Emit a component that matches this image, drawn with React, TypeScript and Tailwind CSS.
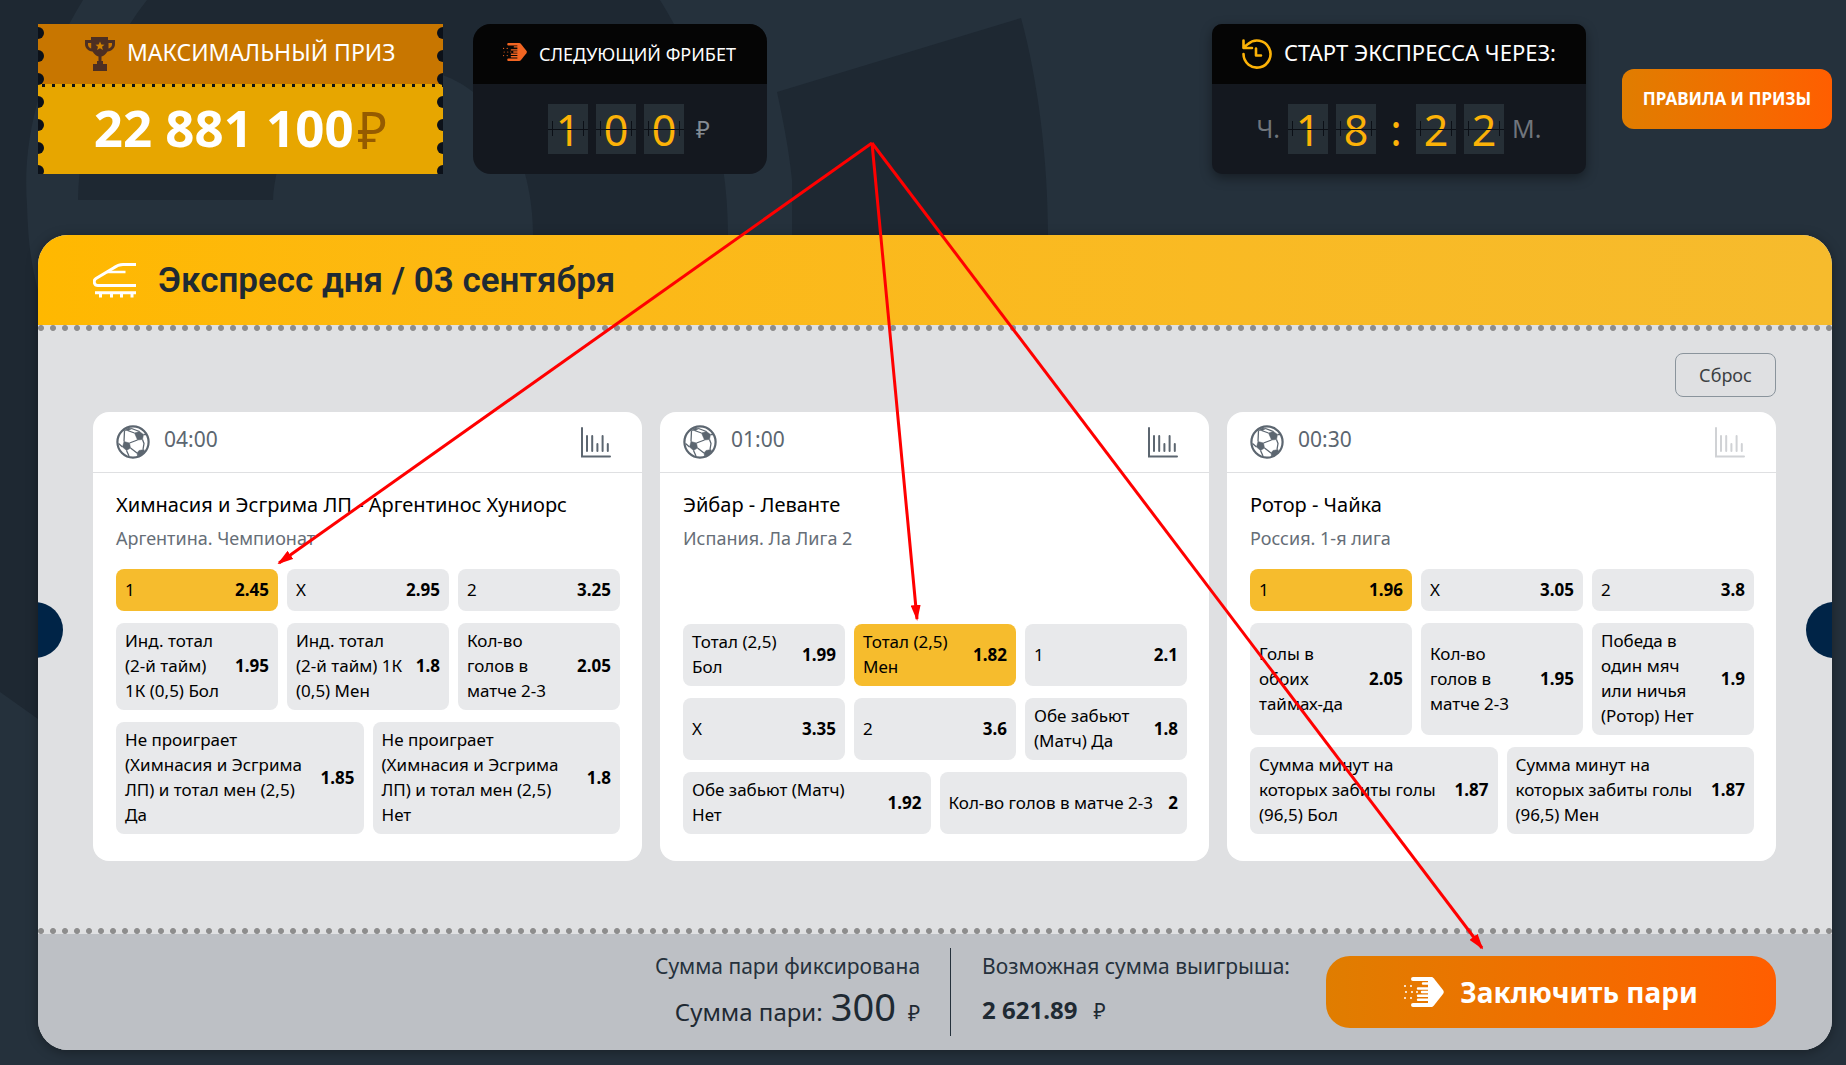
import { Fragment } from 'react'
import clsx from 'clsx'

type Odd = { label: string; value: string; active?: boolean }
type Match = {
  time: string
  teams: string
  league: string
  stats: boolean
  odds: Odd[]
}

const MATCHES: Match[] = [
  {
    time: '04:00',
    teams: 'Химнасия и Эсгрима ЛП - Аргентинос Хуниорс',
    league: 'Аргентина. Чемпионат',
    stats: true,
    odds: [
      { label: '1', value: '2.45', active: true },
      { label: 'X', value: '2.95' },
      { label: '2', value: '3.25' },
      { label: 'Инд. тотал\n(2-й тайм)\n1К (0,5) Бол', value: '1.95' },
      { label: 'Инд. тотал\n(2-й тайм) 1К\n(0,5) Мен', value: '1.8' },
      { label: 'Кол-во\nголов в\nматче 2-3', value: '2.05' },
      { label: 'Не проиграет\n(Химнасия и Эсгрима\nЛП) и тотал мен (2,5)\nДа', value: '1.85' },
      { label: 'Не проиграет\n(Химнасия и Эсгрима\nЛП) и тотал мен (2,5)\nНет', value: '1.8' },
    ],
  },
  {
    time: '01:00',
    teams: 'Эйбар - Леванте',
    league: 'Испания. Ла Лига 2',
    stats: true,
    odds: [
      { label: 'Тотал (2,5)\nБол', value: '1.99' },
      { label: 'Тотал (2,5)\nМен', value: '1.82', active: true },
      { label: '1', value: '2.1' },
      { label: 'X', value: '3.35' },
      { label: '2', value: '3.6' },
      { label: 'Обе забьют\n(Матч) Да', value: '1.8' },
      { label: 'Обе забьют (Матч)\nНет', value: '1.92' },
      { label: 'Кол-во голов в матче 2-3', value: '2' },
    ],
  },
  {
    time: '00:30',
    teams: 'Ротор - Чайка',
    league: 'Россия. 1-я лига',
    stats: false,
    odds: [
      { label: '1', value: '1.96', active: true },
      { label: 'X', value: '3.05' },
      { label: '2', value: '3.8' },
      { label: 'Голы в\nобоих\nтаймах-да', value: '2.05' },
      { label: 'Кол-во\nголов в\nматче 2-3', value: '1.95' },
      { label: 'Победа в\nодин мяч\nили ничья\n(Ротор) Нет', value: '1.9' },
      { label: 'Сумма минут на\nкоторых забиты голы\n(96,5) Бол', value: '1.87' },
      { label: 'Сумма минут на\nкоторых забиты голы\n(96,5) Мен', value: '1.87' },
    ],
  },
]

function TrophyIcon() {
  return (
    <svg viewBox="0 0 30 34" className="h-[34px] w-[30px] shrink-0" fill="#4d2f22">
      <path d="M6 0h17v3h7v4c0 4-3 7-7.500 7.500C20.500 17.500 18.500 19 16.500 19.500V24h1.500v3h4v7H8v-7h4v-3h1.500v-4.500C11.500 19 9.500 17.500 7.500 14.500 3 14 0 11 0 7V3h6V0zM3 6v1.500c0 2 1.500 3.500 3.200 4V6H3zm20.500 0v5.500c2-.5 3.500-2 3.500-4V6h-3.500z" />
      <path d="M15 4.500l1.300 3 3.200.2-2.500 2.100.9 3.200-2.900-1.800-2.900 1.800.9-3.200-2.500-2.100 3.200-.2z" fill="#d08200" />
    </svg>
  )
}

function FastBetIcon({ className }: { className?: string }) {
  return (
    <svg viewBox="0 0 40 30" className={clsx('shrink-0', className)} fill="currentColor">
      <path d="M24 0h3c1.200 0 2 .5 2.700 1.300l9.300 11.700c1 1.300 1 2.700 0 4l-9.300 11.700c-.7.8-1.500 1.300-2.700 1.300h-3z" />
      <path d="M9 2h16M9 28h16" stroke="currentColor" strokeWidth="4" strokeLinecap="round" />
      <path d="M19 6.500h6M14 11.500h11M18 15h7M14 18.800h11M14 22.800h11" stroke="currentColor" strokeWidth="2.400" strokeLinecap="round" />
      {[1, 7].map((x) => (
        <Fragment key={x}>
          <circle cx={x} cy="9" r="1" />
          <circle cx={x + 1} cy="15" r="1" />
          <circle cx={x} cy="21" r="1" />
        </Fragment>
      ))}
      <circle cx="13" cy="15" r="1" />
    </svg>
  )
}

function HistoryIcon() {
  return (
    <svg viewBox="0 0 30 30" className="size-[30px] shrink-0" fill="none" stroke="#fcb207" strokeWidth="2.600" strokeLinecap="round" strokeLinejoin="round">
      <path d="M1.500 15A13.500 13.500 0 1 0 6 5L1.500 8.500M1.500 1.500v7.500h8.500" />
      <path d="M14 9.500v7h5" />
    </svg>
  )
}

function TrainIcon() {
  return (
    <svg viewBox="0 0 44 35" className="h-[35px] w-11 shrink-0" fill="none" stroke="#fff" strokeWidth="3">
      <path d="M43 1.500H30c-4 0-6.500 1.200-9.500 3.500L3 15.500c-3 2-2 7 2 7h38" />
      <path d="M14 9h18.500" strokeWidth="2.500" />
      <path d="M2 29.700h41M7.500 30v4.500M18.500 30v4.500M28.500 30v4.500M39 30v4.500" />
    </svg>
  )
}

function BallIcon() {
  return (
    <svg viewBox="0 0 34 34" className="size-[34px] shrink-0" fill="#5c6670" stroke="#5c6670" strokeLinejoin="round">
      <circle cx="17" cy="17" r="15.600" fill="none" strokeWidth="2.200" />
      <path d="M18.500 8l5-1.500 4 3-1 5-5 .5zM8 16.500l5.500 1.500 1 5-4 2.500L6.500 22zM21 28l2-2.500 5-1 .5 2-4 4-3 .5zM8.500 5.500L12 3l4 .5-3.500 2z" strokeWidth=".5" />
      <path d="M15.500 3.500l8 3M8.500 5.500L8 16.500M11.500 5.500l7 2.500M21.500 15l-8 3M14.500 23l6.500 5M26.500 14.500l1.500 4-1 6M27.500 9.500l2.500 0M2.500 18.500l4 3.500M10.500 25.500l2.500 5.500" fill="none" strokeWidth="1.300" />
    </svg>
  )
}

function StatsIcon() {
  return (
    <svg viewBox="0 0 30 31" className="h-[31px] w-[30px]" fill="none" stroke="currentColor" strokeWidth="2" strokeLinecap="round">
      <path d="M1 1v28.500h28" />
      <path d="M6 9v15M11.200 9v15M16.400 17v7M21.600 9v15M26.800 17v7" />
    </svg>
  )
}

function FlipDigit({ children }: { children: string }) {
  return (
    <span className="relative flex h-[50px] w-10 items-center justify-center bg-[#262f36] text-[43px] leading-none text-[#fcb207]">
      {children}
      <span className="absolute inset-x-0 top-1/2 h-px bg-[#0b0f16]" />
      <span className="absolute inset-x-1 top-[17px] h-[15px] border-x border-[#0b0f16]" />
    </span>
  )
}

function OddButton({ odd, wide }: { odd: Odd; wide: boolean }) {
  return (
    <button
      className={clsx(
        'flex min-h-[42px] items-center justify-between gap-1 rounded-lg px-[9px] pt-[5px] pb-[7px] text-left text-[17px] leading-[25px] text-black',
        wide ? 'col-span-3' : 'col-span-2',
        odd.active ? 'bg-[#f6bc2d]' : 'bg-[#e8e9eb]',
      )}
    >
      <span className="whitespace-pre-line">{odd.label}</span>
      <b className="font-bold">{odd.value}</b>
    </button>
  )
}

function MatchCard({ match }: { match: Match }) {
  return (
    <article className="flex flex-col rounded-2xl bg-white">
      <header className="flex h-[61px] items-center border-b border-[#dfe0e2] px-[23px]">
        <BallIcon />
        <time className="ml-3.5 pb-1.5 text-[21px] leading-7 text-[#5c6670]">{match.time}</time>
        <button
          aria-label="Статистика"
          className={clsx('mr-2 ml-auto', match.stats ? 'text-[#5c6670]' : 'text-[#d0d2d5]')}
        >
          <StatsIcon />
        </button>
      </header>
      <div className="flex grow flex-col px-[22px] pt-[18px] pb-[27px] pl-[23px]">
        <h2 className="text-[20px] leading-[27px] text-black">{match.teams}</h2>
        <p className="mt-2 text-[18px] leading-6 text-[#666e77]">{match.league}</p>
        <div className="mt-auto grid grid-cols-6 gap-x-[9px] gap-y-3 pt-[19px]">
          {match.odds.map((odd, i) => (
            <OddButton key={i} odd={odd} wide={i > 5} />
          ))}
        </div>
      </div>
    </article>
  )
}

function Perforation() {
  return <div className="h-1.5 bg-[radial-gradient(circle,#8d8d8d_2.5px,transparent_3.5px)] bg-[length:12px_6px] bg-[position:-3px_0]" />
}

function TicketHoles({ right }: { right?: boolean }) {
  return (
    <div className={clsx('absolute inset-y-0 flex w-1.5 flex-col gap-[11px] overflow-hidden pt-[3px]', right ? 'right-0' : 'left-0')}>
      {[...Array(7)].map((_, i) => (
        <span key={i} className={clsx('h-3 w-1.5 shrink-0 bg-[#0c1119]', right ? 'rounded-l-full' : 'rounded-r-full')} />
      ))}
    </div>
  )
}

function Backdrop() {
  return (
    <svg className="absolute inset-0 size-full" fill="#1e2832">
      <path d="M0 0H83C40 70 22 140 27 205 28 240 31 265 38 290V719L0 692z" />
      <path d="M147 0H660C700 65 728 140 728 235V400H533V235C533 160 500 95 440 74 360 50 280 100 273 200H78C80 130 100 60 147 0z" />
      <path d="M777 92L1021 18C1038 80 1048 160 1048 235V400H792V180C789 150 783 120 777 92z" />
    </svg>
  )
}

function Arrows() {
  return (
    <svg className="pointer-events-none absolute inset-0 size-full" stroke="#f00" strokeWidth="3">
      <defs>
        <marker id="tip" viewBox="0 0 16 10" refX="14" refY="5" markerWidth="16" markerHeight="10" markerUnits="userSpaceOnUse" orient="auto">
          <path d="M0 0l16 5-16 5z" fill="#f00" stroke="none" />
        </marker>
      </defs>
      <line x1="872" y1="143" x2="279" y2="563" markerEnd="url(#tip)" />
      <line x1="872" y1="143" x2="917" y2="619" markerEnd="url(#tip)" />
      <line x1="872" y1="143" x2="1482" y2="948" markerEnd="url(#tip)" />
    </svg>
  )
}

export default function App() {
  return (
    <div className="relative min-h-screen bg-[#25313c] font-['Noto_Sans','Open_Sans',sans-serif]">
      <Backdrop />
      <div className="relative pt-6 pr-3.5 pb-[15px] pl-[38px]">
        <div className="flex items-center">
          <section className="relative w-[405px] text-white">
            <div className="flex h-[60px] items-center bg-[#c87600] pr-4 pl-[47px]">
              <TrophyIcon />
              <h2 className="ml-3 pb-1 text-[23px] leading-7 whitespace-nowrap">МАКСИМАЛЬНЫЙ ПРИЗ</h2>
            </div>
            <div className="h-[3px] bg-[#e7a600] bg-[linear-gradient(90deg,#0c1119_3px,transparent_3px)] bg-[length:10px_3px] bg-[position:4px_0]" />
            <div className="flex h-[87px] items-center justify-center bg-[#e7a600] pb-1.5 text-[51px] leading-none">
              <b className="font-bold">22 881 100</b>
              <span className="ml-1 pt-1 text-[#955b00]">₽</span>
            </div>
            <TicketHoles />
            <TicketHoles right />
          </section>

          <section className="ml-[30px] w-[294px] overflow-hidden rounded-[18px] bg-[#14181f]">
            <div className="flex h-[60px] items-center bg-[#050505] pb-1 pl-[30px]">
              <FastBetIcon className="h-[18px] w-6 text-[#f26522]" />
              <h2 className="ml-3 pt-1 text-[18px] leading-6 whitespace-nowrap text-white">СЛЕДУЮЩИЙ ФРИБЕТ</h2>
            </div>
            <div className="flex h-[90px] items-center gap-2 pl-[75px]">
              <FlipDigit>1</FlipDigit>
              <FlipDigit>0</FlipDigit>
              <FlipDigit>0</FlipDigit>
              <span className="ml-1 text-[24px] text-[#848b93]">₽</span>
            </div>
          </section>

          <section className="ml-auto w-[374px] overflow-hidden rounded-[10px] bg-[#14181f] shadow-[0_4px_12px_rgba(0,0,0,0.4)]">
            <div className="flex h-[60px] items-center bg-[#050505] pl-[30px]">
              <HistoryIcon />
              <h2 className="ml-3 pb-1 text-[22px] leading-7 whitespace-nowrap text-white">СТАРТ ЭКСПРЕССА ЧЕРЕЗ:</h2>
            </div>
            <div className="flex h-[90px] items-center justify-center gap-2 text-[25px] text-[#70757c]">
              <span>Ч.</span>
              <FlipDigit>1</FlipDigit>
              <FlipDigit>8</FlipDigit>
              <span className="w-6 text-center text-[43px] leading-none text-[#fcb207]">:</span>
              <FlipDigit>2</FlipDigit>
              <FlipDigit>2</FlipDigit>
              <span>М.</span>
            </div>
          </section>

          <button className="ml-9 h-[60px] w-[210px] rounded-xl bg-linear-to-r from-[#e07d00] to-[#ff5e00] text-[17px] font-bold whitespace-nowrap text-white">
            ПРАВИЛА И ПРИЗЫ
          </button>
        </div>

        <main className="relative mt-[61px] overflow-hidden rounded-[30px] bg-[#dfe0e2] shadow-[0_2px_12px_rgba(0,0,0,0.35)]">
          <header className="flex h-[90px] items-center bg-linear-to-r from-[#ffb800] to-[#f6bb2d] px-[55px]">
            <TrainIcon />
            <h1 className="ml-[21px] pt-0.5 font-['Roboto',sans-serif] text-[35px] leading-10 font-semibold text-[#1f2a33]">
              Экспресс дня / 03 сентября
            </h1>
          </header>
          <Perforation />

          <div className="pt-[22px] pr-14 pb-[67px] pl-[55px]">
            <div className="flex justify-end">
              <button className="h-11 w-[101px] rounded-lg border border-[#8a949c] text-[18px] text-[#3c4043]">Сброс</button>
            </div>
            <div className="mt-[15px] grid grid-cols-3 gap-[18px]">
              {MATCHES.map((m) => (
                <MatchCard key={m.teams} match={m} />
              ))}
            </div>
          </div>

          <Perforation />
          <footer className="flex h-[116px] items-center justify-end bg-[#bdc0c5] pr-14 pl-[55px] text-[21px] text-[#25313c]">
            <div className="flex h-[88px] flex-col items-end border-r border-[#25313c] pt-1 pr-[30px]">
              <span className="leading-7">Сумма пари фиксирована</span>
              <span className="flex items-baseline text-[24px] leading-[52px] text-[#1f2a33]">
                Сумма пари:
                <span className="ml-2 text-[38px]">300</span>
                <span className="ml-3 text-[21px]">₽</span>
              </span>
            </div>
            <div className="flex h-[88px] flex-col pt-1 pl-[31px]">
              <span className="leading-7">Возможная сумма выигрыша:</span>
              <span className="flex items-baseline text-[24px] leading-[60px] text-[#1f2a33]">
                <b className="font-bold">2 621.89</b>
                <span className="ml-4 text-[21px]">₽</span>
              </span>
            </div>
            <button className="ml-9 flex h-[72px] w-[450px] items-center justify-center gap-4 rounded-3xl bg-linear-to-r from-[#e07d00] to-[#ff5e00] text-[28px] font-bold text-white">
              <FastBetIcon className="h-[30px] w-10" />
              Заключить пари
            </button>
          </footer>

          <button aria-label="Назад" className="absolute top-[367px] -left-[31px] size-14 rounded-full bg-[#002447]" />
          <button aria-label="Вперёд" className="absolute top-[367px] -right-[30px] size-14 rounded-full bg-[#002447]" />
        </main>
      </div>
      <Arrows />
    </div>
  )
}
